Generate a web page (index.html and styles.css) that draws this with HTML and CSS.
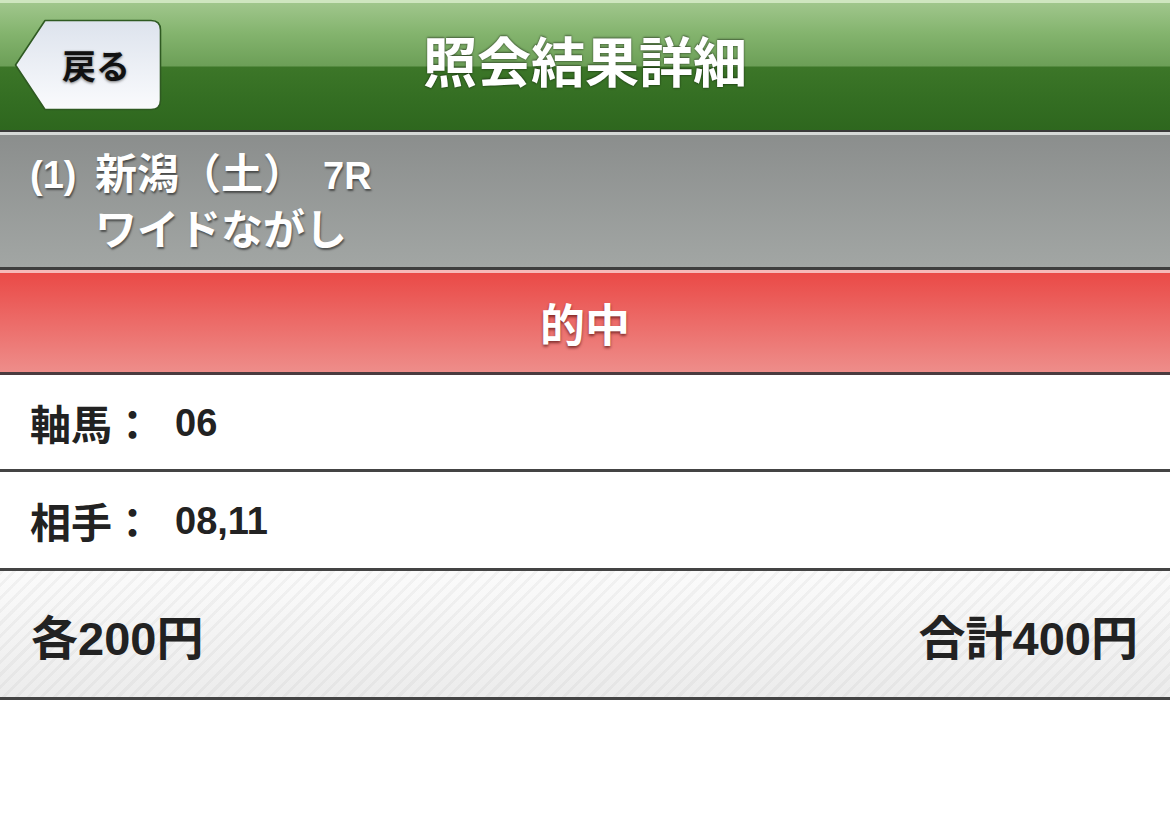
FILE: index.html
```html
<!DOCTYPE html>
<html lang="ja">
<head>
<meta charset="utf-8">
<title>照会結果詳細</title>
<link rel="stylesheet" href="styles.css">
</head>
<body>
<header class="nav">
  <div class="nav-left">
    <a class="back" href="#">
      <svg class="back-shape" width="148" height="92" viewBox="0 0 148 92" aria-hidden="true">
        <defs>
          <linearGradient id="bg" x1="0" y1="0" x2="0" y2="1">
            <stop offset="0" stop-color="#dde3ed"/>
            <stop offset="1" stop-color="#fafbfd"/>
          </linearGradient>
        </defs>
        <path d="M31 1.5 H137 Q146.5 1.5 146.5 11 V81 Q146.5 90.5 137 90.5 H31 L1.5 46 Z" fill="url(#bg)" stroke="#2f5a22" stroke-width="1.6" stroke-linejoin="round"/>
      </svg>
      <span class="back-label">戻る</span>
    </a>
  </div>
  <h1 class="nav-title">照会結果詳細</h1>
  <div class="nav-right"></div>
</header>

<section class="race">
  <span class="race-no">(1)</span>
  <div class="race-info">
    <div class="race-line">新潟（土）<span class="race-r">7R</span></div>
    <div class="race-line">ワイドながし</div>
  </div>
</section>

<div class="result">的中</div>

<div class="row">
  <span class="row-label">軸馬：</span>
  <span class="row-value">06</span>
</div>
<div class="row row-2">
  <span class="row-label">相手：</span>
  <span class="row-value">08,11</span>
</div>

<div class="summary">
  <span>各200円</span>
  <span>合計400円</span>
</div>
</body>
</html>
```

FILE: styles.css
```css
* { box-sizing: border-box; }

html, body {
  margin: 0;
  padding: 0;
  background: #ffffff;
}

body {
  width: 1170px;
  font-family: "Liberation Sans", "Noto Sans CJK JP", sans-serif;
  font-weight: bold;
  color: #222222;
}

.nav {
  height: 132px;
  display: grid;
  grid-template-columns: 1fr auto 1fr;
  align-items: center;
  border-top: 3px solid #cfe6c0;
  border-bottom: 2px solid #3a3a3a;
  background: linear-gradient(to bottom,
    #a0c68c 0px,
    #84b46e 30px,
    #6c9f57 63px,
    #3c7628 64px,
    #336d22 100px,
    #2e671e 127px);
}

.nav-left {
  display: flex;
  align-items: center;
  padding-left: 14px;
  padding-bottom: 4px;
}

.back {
  position: relative;
  display: flex;
  align-items: center;
  justify-content: center;
  width: 148px;
  height: 92px;
  padding-left: 16px;
  text-decoration: none;
}

.back-shape {
  position: absolute;
  left: 0;
  top: 0;
}

.back-label {
  position: relative;
  font-size: 34px;
  color: #111111;
  text-shadow: 0 1px 3px rgba(0, 0, 0, 0.55);
}

.nav-title {
  margin: 0;
  font-size: 54px;
  line-height: 1;
  color: #ffffff;
  font-weight: bold;
  padding-bottom: 6px;
  text-shadow: 0 -1px 2px rgba(0, 0, 0, 0.45), 0 1px 2px rgba(0, 0, 0, 0.3);
}

.race {
  display: flex;
  align-items: flex-start;
  height: 138px;
  padding: 12px 0 0 30px;
  border-top: 3px solid #d6d9d7;
  border-bottom: 3px solid #3e3e3e;
  background: linear-gradient(to bottom, #8b8e8d, #a2a6a4);
  color: #ffffff;
  font-size: 42px;
  text-shadow: 1px 2px 2px rgba(0, 0, 0, 0.5);
}

.race-no {
  line-height: 56px;
  width: 65px;
  font-size: 38px;
}

.race-info {
  display: flex;
  flex-direction: column;
}

.race-line {
  line-height: 56px;
  height: 56px;
}

.race-r {
  margin-left: 18px;
  font-size: 38px;
}

.result {
  height: 105px;
  display: flex;
  align-items: center;
  justify-content: center;
  border-top: 3px solid #f6b9b8;
  border-bottom: 3px solid #4a3b3f;
  background: linear-gradient(to bottom, #ea4a47, #ee8d8a);
  color: #ffffff;
  font-size: 45px;
  text-shadow: 0 2px 3px rgba(60, 0, 0, 0.6);
}

.row {
  height: 97px;
  display: flex;
  align-items: center;
  padding-left: 30px;
  border-bottom: 3px solid #444444;
  color: #222222;
}

.row-2 {
  height: 99px;
}

.row-label {
  width: 145px;
  font-size: 41px;
}

.row-value {
  font-size: 38px;
  padding-top: 2px;
}

.summary {
  height: 129px;
  display: flex;
  align-items: center;
  justify-content: space-between;
  padding: 0 32px 0 31px;
  border-bottom: 3px solid #444444;
  font-size: 47px;
  color: #222222;
  background:
    repeating-linear-gradient(135deg,
      rgba(0, 0, 0, 0.035) 0px,
      rgba(0, 0, 0, 0.035) 3px,
      rgba(0, 0, 0, 0) 3px,
      rgba(0, 0, 0, 0) 9px),
    linear-gradient(to bottom, #fbfbfb, #ececec);
}
```
